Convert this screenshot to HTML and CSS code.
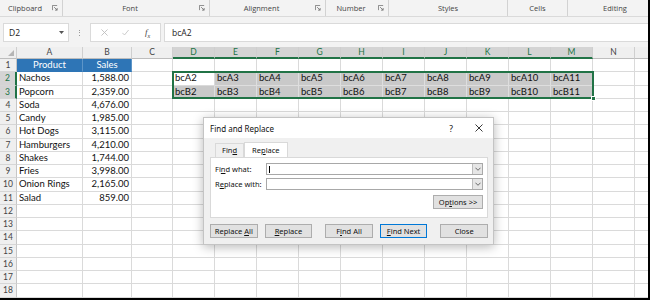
FILE: index.html
```html
<!DOCTYPE html>
<html>
<head>
<meta charset="utf-8">
<link rel="stylesheet" href="styles.css">
</head>
<body>
<div class="app">
  <div class="ribbon">
    <div class="grp g1"><span class="lbl">Clipboard</span><svg class="launch" viewBox="0 0 7 7"><path d="M0.5 6V0.5H6"/><path d="M2.5 2.5L6 6M6 3.5V6H3.5"/></svg></div>
    <div class="grp g2"><span class="lbl">Font</span><svg class="launch" viewBox="0 0 7 7"><path d="M0.5 6V0.5H6"/><path d="M2.5 2.5L6 6M6 3.5V6H3.5"/></svg></div>
    <div class="grp g3"><span class="lbl">Alignment</span><svg class="launch" viewBox="0 0 7 7"><path d="M0.5 6V0.5H6"/><path d="M2.5 2.5L6 6M6 3.5V6H3.5"/></svg></div>
    <div class="grp g4"><span class="lbl">Number</span><svg class="launch" viewBox="0 0 7 7"><path d="M0.5 6V0.5H6"/><path d="M2.5 2.5L6 6M6 3.5V6H3.5"/></svg></div>
    <div class="grp g5"><span class="lbl">Styles</span></div>
    <div class="grp g6"><span class="lbl">Cells</span></div>
    <div class="grp g7"><span class="lbl">Editing</span></div>
  </div>

  <div class="fbar">
    <div class="namebox"><span>D2</span><svg class="nbdd" viewBox="0 0 5 3"><path d="M0 0H5L2.5 3Z"/></svg></div>
    <div class="dots"><i></i><i></i><i></i></div>
    <div class="fbtns">
      <svg class="fi" viewBox="0 0 8 8"><path d="M0.5 0.5L7.5 7.5M7.5 0.5L0.5 7.5"/></svg>
      <svg class="fi" viewBox="0 0 9 8"><path d="M0.5 4.5L3.2 7.2L8.5 0.8"/></svg>
      <span class="fx">f<sub>x</sub></span>
    </div>
    <div class="finput">bcA2</div>
  </div>

  <div class="sheet">
    <div class="row hdr"><div class="corner"><svg viewBox="0 0 6 6"><path d="M6 0V6H0Z"/></svg></div><div>A</div><div>B</div><div>C</div><div class="hs">D</div><div class="hs">E</div><div class="hs">F</div><div class="hs">G</div><div class="hs">H</div><div class="hs">I</div><div class="hs">J</div><div class="hs">K</div><div class="hs">L</div><div class="hs">M</div><div>N</div><div></div></div>
    <div class="row"><div class="rh">1</div><div class="th">Product</div><div class="th">Sales</div><div></div><div></div><div></div><div></div><div></div><div></div><div></div><div></div><div></div><div></div><div></div><div></div><div></div></div>
    <div class="row"><div class="rh rs">2</div><div>Nachos</div><div class="n">1,588.00</div><div></div><div class="act">bcA2</div><div class="sc">bcA3</div><div class="sc">bcA4</div><div class="sc">bcA5</div><div class="sc">bcA6</div><div class="sc">bcA7</div><div class="sc">bcA8</div><div class="sc">bcA9</div><div class="sc">bcA10</div><div class="sc">bcA11</div><div></div><div></div></div>
    <div class="row"><div class="rh rs">3</div><div>Popcorn</div><div class="n">2,359.00</div><div></div><div class="sc">bcB2</div><div class="sc">bcB3</div><div class="sc">bcB4</div><div class="sc">bcB5</div><div class="sc">bcB6</div><div class="sc">bcB7</div><div class="sc">bcB8</div><div class="sc">bcB9</div><div class="sc">bcB10</div><div class="sc">bcB11</div><div></div><div></div></div>
    <div class="row"><div class="rh">4</div><div>Soda</div><div class="n">4,676.00</div><div></div><div></div><div></div><div></div><div></div><div></div><div></div><div></div><div></div><div></div><div></div><div></div><div></div></div>
    <div class="row"><div class="rh">5</div><div>Candy</div><div class="n">1,985.00</div><div></div><div></div><div></div><div></div><div></div><div></div><div></div><div></div><div></div><div></div><div></div><div></div><div></div></div>
    <div class="row"><div class="rh">6</div><div>Hot Dogs</div><div class="n">3,115.00</div><div></div><div></div><div></div><div></div><div></div><div></div><div></div><div></div><div></div><div></div><div></div><div></div><div></div></div>
    <div class="row"><div class="rh">7</div><div>Hamburgers</div><div class="n">4,210.00</div><div></div><div></div><div></div><div></div><div></div><div></div><div></div><div></div><div></div><div></div><div></div><div></div><div></div></div>
    <div class="row"><div class="rh">8</div><div>Shakes</div><div class="n">1,744.00</div><div></div><div></div><div></div><div></div><div></div><div></div><div></div><div></div><div></div><div></div><div></div><div></div><div></div></div>
    <div class="row"><div class="rh">9</div><div>Fries</div><div class="n">3,998.00</div><div></div><div></div><div></div><div></div><div></div><div></div><div></div><div></div><div></div><div></div><div></div><div></div><div></div></div>
    <div class="row"><div class="rh">10</div><div>Onion Rings</div><div class="n">2,165.00</div><div></div><div></div><div></div><div></div><div></div><div></div><div></div><div></div><div></div><div></div><div></div><div></div><div></div></div>
    <div class="row"><div class="rh">11</div><div>Salad</div><div class="n">859.00</div><div></div><div></div><div></div><div></div><div></div><div></div><div></div><div></div><div></div><div></div><div></div><div></div><div></div></div>
    <div class="row"><div class="rh">12</div><div></div><div></div><div></div><div></div><div></div><div></div><div></div><div></div><div></div><div></div><div></div><div></div><div></div><div></div><div></div></div>
    <div class="row"><div class="rh">13</div><div></div><div></div><div></div><div></div><div></div><div></div><div></div><div></div><div></div><div></div><div></div><div></div><div></div><div></div><div></div></div>
    <div class="row"><div class="rh">14</div><div></div><div></div><div></div><div></div><div></div><div></div><div></div><div></div><div></div><div></div><div></div><div></div><div></div><div></div><div></div></div>
    <div class="row"><div class="rh">15</div><div></div><div></div><div></div><div></div><div></div><div></div><div></div><div></div><div></div><div></div><div></div><div></div><div></div><div></div><div></div></div>
    <div class="row"><div class="rh">16</div><div></div><div></div><div></div><div></div><div></div><div></div><div></div><div></div><div></div><div></div><div></div><div></div><div></div><div></div><div></div></div>
    <div class="row"><div class="rh">17</div><div></div><div></div><div></div><div></div><div></div><div></div><div></div><div></div><div></div><div></div><div></div><div></div><div></div><div></div><div></div></div>
    <div class="row"><div class="rh">18</div><div></div><div></div><div></div><div></div><div></div><div></div><div></div><div></div><div></div><div></div><div></div><div></div><div></div><div></div><div></div></div>
    <div class="selbox"><i class="handle"></i></div>
  </div>

  <div class="dialog">
    <div class="dtitle"><span class="dt">Find and Replace</span><span class="q">?</span><svg class="dx" viewBox="0 0 8 8"><path d="M0.5 0.5L7.5 7.5M7.5 0.5L0.5 7.5"/></svg></div>
    <div class="dbody">
      <div class="tabs"><div class="tab"><span>Fin<u>d</u></span></div><div class="tab on"><span>Re<u>p</u>lace</span></div></div>
      <div class="panel">
        <div class="frow"><span class="flbl">Fi<u>n</u>d what:</span><div class="combo"><i class="caret"></i><span class="ddb"><svg viewBox="0 0 7 4"><path d="M0.5 0.5L3.5 3.5L6.5 0.5"/></svg></span></div></div>
        <div class="frow"><span class="flbl">R<u>e</u>place with:</span><div class="combo"><span class="ddb"><svg viewBox="0 0 7 4"><path d="M0.5 0.5L3.5 3.5L6.5 0.5"/></svg></span></div></div>
        <div class="optrow"><div class="btn"><span>Op<u>t</u>ions &gt;&gt;</span></div></div>
      </div>
      <div class="btns">
        <div class="btn"><span>Replace <u>A</u>ll</span></div>
        <div class="btn"><span><u>R</u>eplace</span></div>
        <div class="btn wide"><span>F<u>i</u>nd All</span></div>
        <div class="btn def"><span><u>F</u>ind Next</span></div>
        <div class="btn wide"><span>Close</span></div>
      </div>
    </div>
  </div>
</div>
</body>
</html>
```

FILE: styles.css
```css
* { box-sizing: border-box; margin: 0; padding: 0; }
body { width: 650px; height: 300px; overflow: hidden; background: #fff; font-family: Lato, "Liberation Sans", sans-serif; }
.app { position: relative; width: 650px; height: 300px; overflow: hidden; border-right: 2px solid #000; border-bottom: 2px solid #000; }

/* ribbon group labels */
.ribbon { display: flex; height: 17px; background: #f3f3f3; border-bottom: 1px solid #dadada; font-family: "Open Sans", sans-serif; font-size: 7.5px; color: #444; }
.grp { display: flex; align-items: center; height: 16px; border-right: 1px solid #d2d2d2; flex: none; }
.grp .lbl { flex: 1; text-align: center; }
.launch { width: 6px; height: 6px; margin: 0 4px 0 2px; fill: none; stroke: #777; stroke-width: 1; }
.g1 { width: 63px; }
.g2 { width: 147px; }
.g3 { width: 116px; }
.g4 { width: 63px; }
.g5 { width: 119px; }
.g6 { width: 60px; }
.g7 { width: 94px; border-right: none; }

/* formula bar */
.fbar { display: flex; height: 30px; padding: 6px 0 5px 3px; background: #f3f3f3; }
.namebox { width: 66px; display: flex; align-items: center; justify-content: space-between; padding: 0 4px 0 5px; background: #fff; border: 1px solid #dadada; font-family: "Open Sans", sans-serif; font-size: 8.5px; color: #222; }
.nbdd { width: 5px; height: 3px; fill: #555; }
.dots { width: 21px; display: flex; flex-direction: column; align-items: center; justify-content: center; gap: 1.5px; }
.dots i { width: 1px; height: 1px; background: #9a9a9a; }
.fbtns { width: 71px; display: flex; align-items: center; padding-left: 10px; gap: 14px; background: #fff; border: 1px solid #dadada; }
.fi { width: 7px; height: 7px; fill: none; stroke: #bdbdbd; stroke-width: 1; }
.fx { font-family: "Liberation Serif", serif; font-style: italic; font-size: 9px; color: #444; margin-left: 2px; }
.fx sub { font-size: 6px; }
.finput { flex: 1; margin-left: 3px; display: flex; align-items: center; padding-left: 7px; background: #fff; border: 1px solid #dadada; border-right: none; font-family: "Open Sans", sans-serif; font-size: 8.5px; color: #222; }

/* sheet */
.sheet { position: relative; }
.row { display: grid; grid-template-columns: 17px 66px 49px 41px repeat(11, 42px) 15px; height: 13.25px; font-size: 9.5px; color: #111; }
.row > div { border-right: 1px solid #dadada; border-bottom: 1px solid #dadada; padding: 0 2px; line-height: 12px; white-space: nowrap; overflow: hidden; }
.row.hdr { height: 12px; background: #efefef; color: #444; font-size: 8.5px; }
.row.hdr > div { text-align: center; line-height: 11px; border-right-color: #cfcfcf; border-bottom-color: #bdbdbd; }
.row.hdr > .hs { background: #d4d4d4; color: #217346; border-bottom: 2px solid #217346; }
.corner { position: relative; }
.corner svg { position: absolute; right: 2px; bottom: 2px; width: 6px; height: 6px; fill: #b5b5b5; }
.row > .rh { background: #efefef; color: #444; font-size: 8.5px; text-align: center; padding: 0; border-right-color: #c6c6c6; border-bottom-color: #d6d6d6; }
.row > .rs { background: #d4d4d4; color: #217346; border-right: 2px solid #217346; }
.row > .th { background: #2e75b6; color: #fff; text-align: center; border-color: #2e75b6; border-right-color: #5d95c8; }
.row > .n { text-align: right; padding-right: 2px; }
.row > .sc { background: #c9c9c9; border-color: #dedede; }
.row > .act { background: #fff; }
.selbox { position: absolute; left: 172px; top: 24.25px; width: 422px; height: 27.5px; border: 2px solid #217346; pointer-events: none; }
.handle { position: absolute; right: -4px; bottom: -4px; width: 5px; height: 5px; background: #217346; border: 1px solid #fff; }

/* dialog */
.dialog { position: absolute; left: 203px; top: 117px; width: 291px; height: 128px; background: #f0f0f0; border: 1px solid #c4c4c4; box-shadow: 0 2px 10px rgba(0,0,0,0.28); font-family: "Noto Sans", sans-serif; font-size: 7.5px; color: #111; }
.dtitle { display: flex; align-items: center; height: 20px; background: #fff; padding: 0 10px 0 6px; }
.dt { flex: 1; font-size: 8px; }
.q { font-size: 8.5px; margin-right: 22px; }
.dx { width: 8px; height: 8px; fill: none; stroke: #222; stroke-width: 0.9; }
.dbody { padding: 4px 5px 0 6px; }
.tabs { display: flex; padding-left: 5px; height: 15px; align-items: flex-end; }
.tab { height: 14px; padding: 0 6px; line-height: 13px; border: 1px solid #d9d9d9; border-bottom: none; background: #f0f0f0; }
.tab.on { height: 15px; background: #fff; padding: 0 7px; line-height: 14px; }
.panel { height: 61px; background: #fff; border: 1px solid #d9d9d9; padding: 5px 4px 0 4px; }
.frow { display: flex; align-items: center; height: 12px; margin-bottom: 3px; }
.flbl { width: 51px; }
.combo { position: relative; width: 217px; height: 12px; border: 1px solid #a8a8a8; background: #fff; display: flex; justify-content: flex-end; }
.caret { position: absolute; left: 2px; top: 2px; width: 1px; height: 7px; background: #000; }
.ddb { width: 10px; height: 10px; background: #e6e6e6; border-left: 1px solid #bdbdbd; display: flex; align-items: center; justify-content: center; }
.ddb svg { width: 6px; height: 4px; fill: none; stroke: #444; stroke-width: 0.9; }
.optrow { display: flex; justify-content: flex-end; margin-top: 5px; width: 268px; }
.btn { width: 48px; height: 14px; display: flex; align-items: center; justify-content: center; background: #e1e1e1; border: 1px solid #adadad; font-size: 7.5px; color: #111; white-space: nowrap; }
.optrow .btn { width: 50px; }
.btns { display: flex; margin-top: 6px; }
.btns .btn + .btn { margin-left: 7px; }
.btns .btn.wide { margin-left: 13px; }
.btn.def { border: 1.5px solid #0078d7; }
u { text-decoration: underline; text-underline-offset: 1px; }
```
